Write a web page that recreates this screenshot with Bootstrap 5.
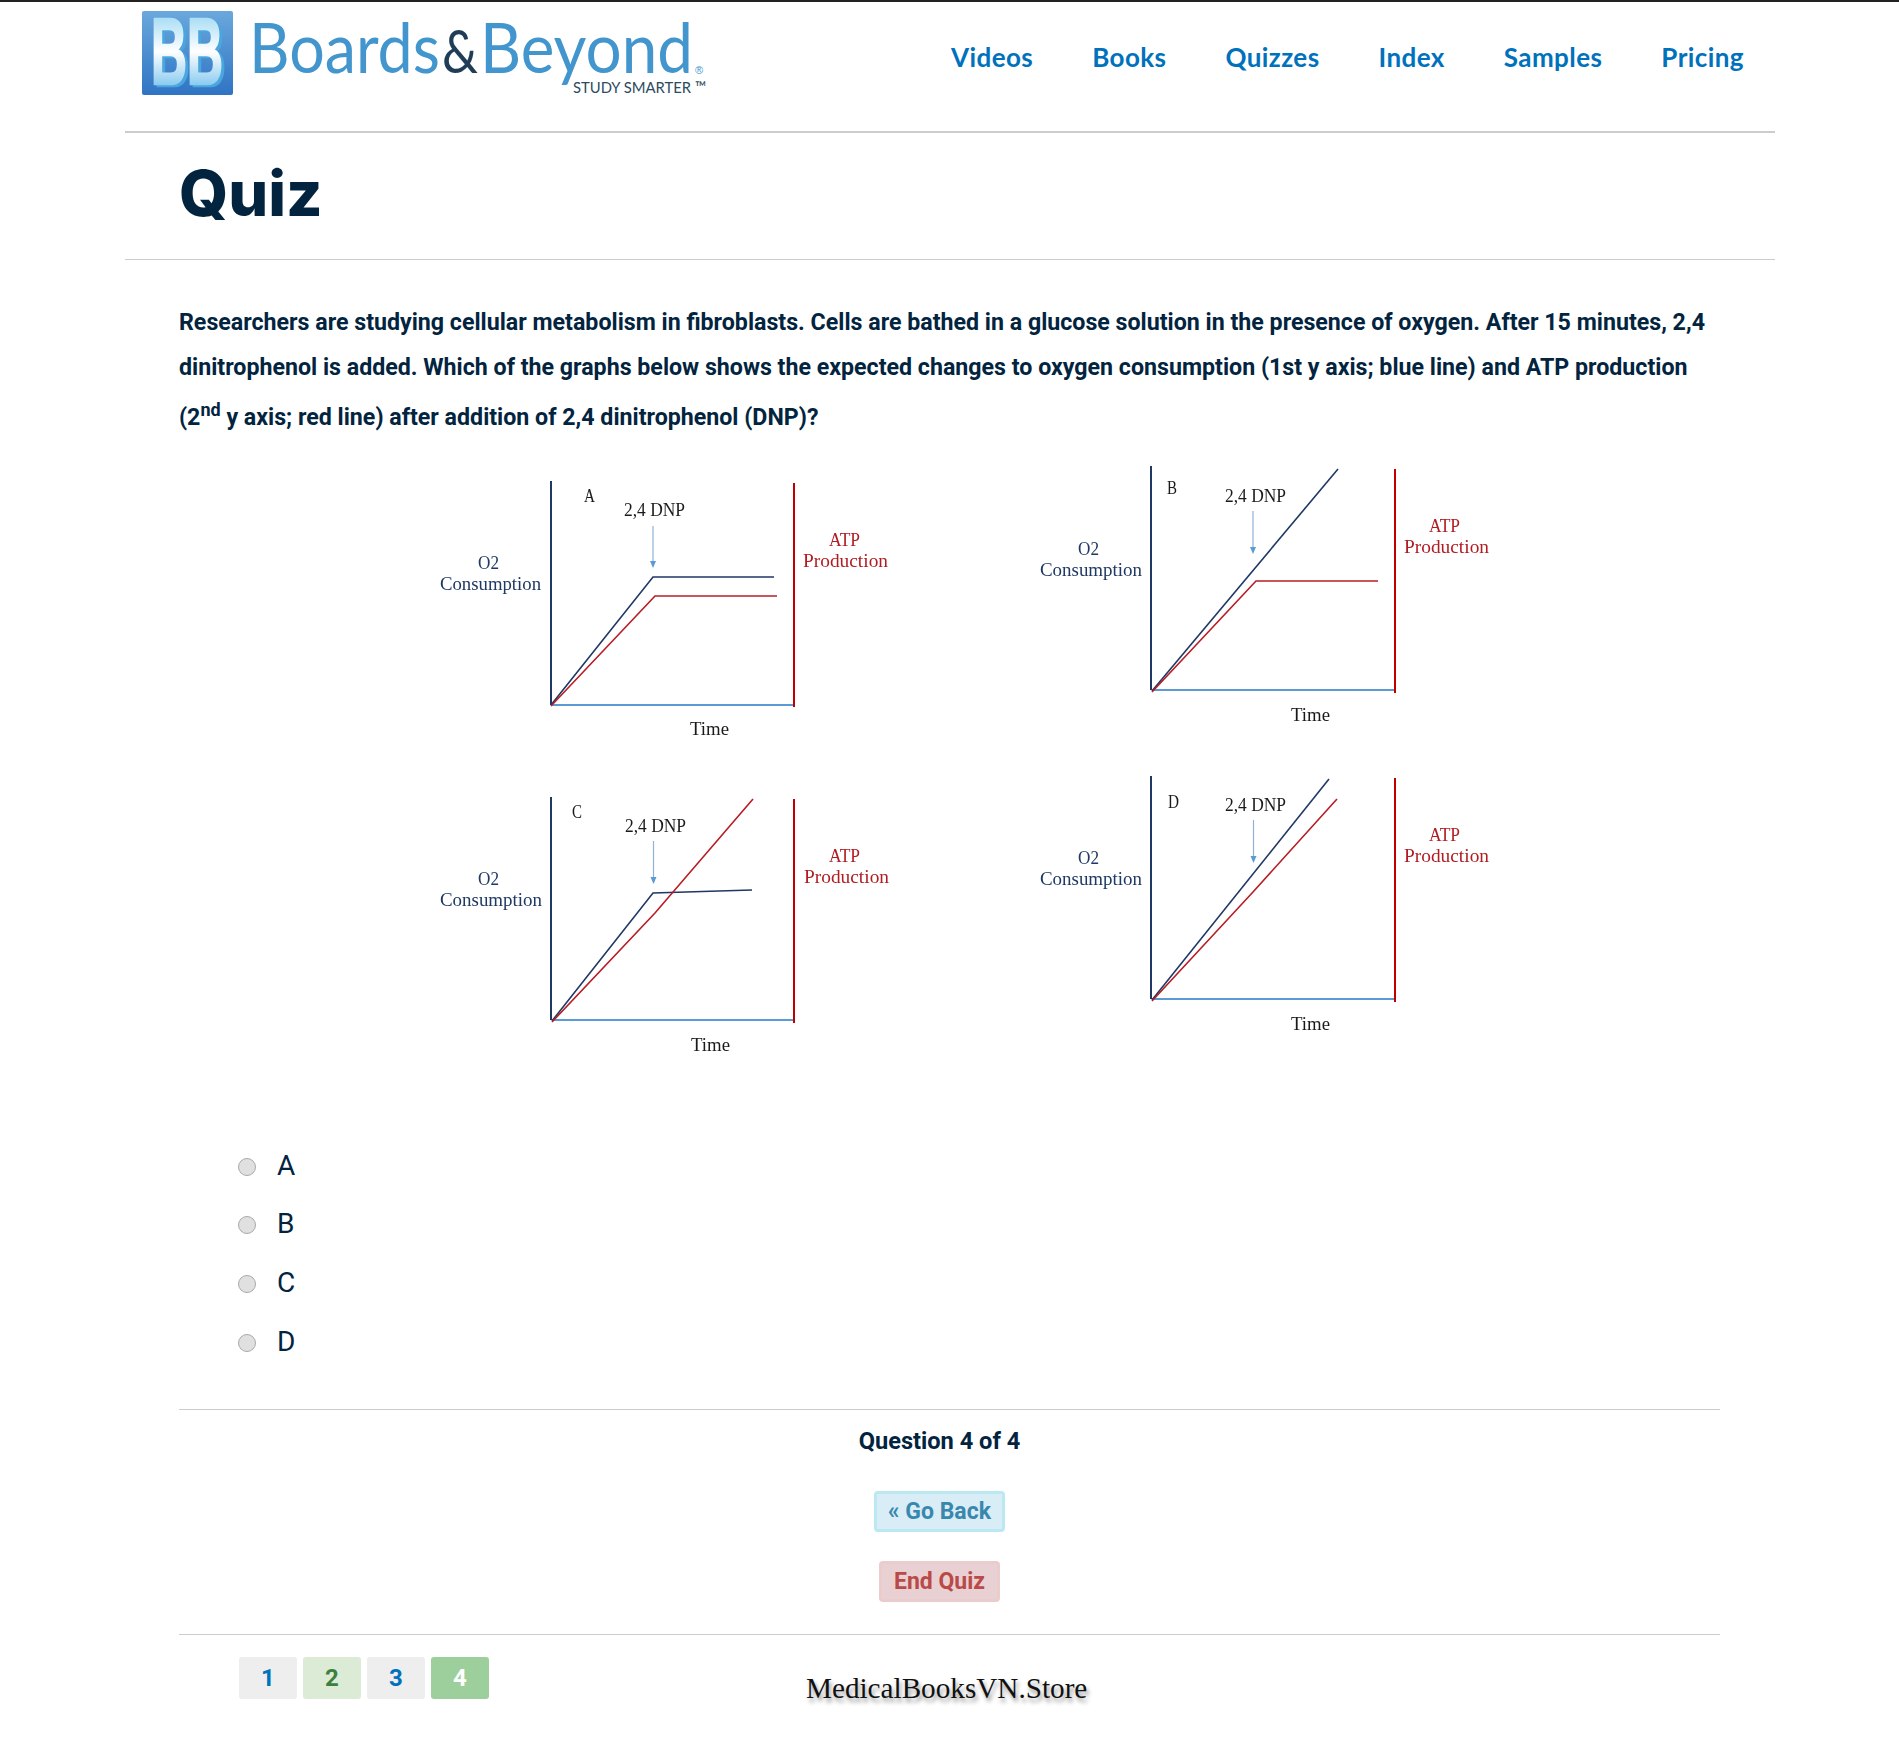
<!DOCTYPE html>
<html lang="en">
<head>
  <meta charset="UTF-8"/>
  <title>Boards &amp; Beyond — Quiz</title>
  <link href="https://cdn.jsdelivr.net/npm/bootstrap@5.3.0/dist/css/bootstrap.min.css" rel="stylesheet"/>
  <style>
    body{background:#fff;color:#02243f;font-family:"Liberation Sans",Arial,sans-serif;border-top:2px solid #222;min-height:1746px;}
    .page-wrap{width:1650px;margin-left:125px;}
    .bb-head{height:131px;border-bottom:2px solid #ccc;}
    .bb-logo{display:block;margin-left:17px;}
    .bb-links{gap:59px;margin-top:36px;margin-right:31px;}
    .bb-links .nav-link{padding:0;font-family:Lato,sans-serif;font-weight:700;font-size:26px;letter-spacing:.42px;line-height:38px;color:#0071bc;}
    .title-row{height:127px;border-bottom:1px solid #ccc;padding-left:54px;}
    .title-row h1{margin:0;font-family:Inter,sans-serif;font-weight:800;font-size:63px;letter-spacing:0;line-height:120px;color:#02243f;}
    .quiz-body{padding:0 55px 0 54px;}
    .q-text{margin:40px 0 0;font-family:Roboto,sans-serif;font-weight:700;font-size:23.2px;line-height:44.6px;}
    .q-text sup{position:static;vertical-align:9px;font-size:18px;line-height:42px;}
    .q-figure{display:block;margin:20.6px auto 0;filter:blur(.35px);}
    .q-figure text{font-family:"Liberation Serif",serif;font-size:18px;}
    .answers{margin:56px 0 0;padding:0 0 0 59px;}
    .answer-row{display:flex;align-items:center;gap:21px;height:58.7px;margin:0;padding:0;}
    .answer-row .form-check-input{float:none;margin:2px 0 0;width:18px;height:18px;background-color:#e0e0e0;border:1px solid #aaa;}
    .answer-row label{font-family:Roboto,sans-serif;font-size:28px;line-height:1;}
    .q-foot{border-top:1px solid #ccc;margin-top:38px;padding:0 20px 0 0;text-align:center;}
    .q-count{font-family:Roboto,sans-serif;font-weight:700;font-size:23.6px;line-height:30px;margin:16px 0 35px;}
    .q-btn{display:block;width:max-content;margin:0 auto;font-family:Roboto,sans-serif;font-weight:700;font-size:23px;line-height:29px;padding:3px 11px;border-width:3px;border-radius:4px;}
    .btn-back,.btn-back:hover{background:#d9edf7;border-color:#bce8f1;color:#3a87ad;margin-bottom:29px;}
    .btn-end,.btn-end:hover{background:#e9d0d3;border-color:#ebcccc;color:#b94a48;padding:3px 12px;}
    .pager-rule{border-top:1px solid #ccc;margin-top:32px;}
    .pager-row{padding:22px 0 0 60px;}
    .pager-list{gap:6px;}
    .pager-box{display:block;width:58px;height:42px;border-radius:3px;text-align:center;text-decoration:none;font-family:Roboto,sans-serif;font-weight:700;font-size:24px;line-height:42px;background:#eee;color:#0071bc;}
    .pager-box.is-right{background:#dcebd5;color:#3c8040;}
    .pager-box.is-on{background:#9ccf9b;color:#fff;}
    .store-mark{margin:11px 0 0 317px;font-family:"Liberation Serif",serif;font-size:29.2px;color:#111;text-shadow:2px 4px 4px #999;line-height:40px;}
    .logo-bb{filter:drop-shadow(3px 2px 0 #4aa6de);}
  </style>
</head>
<body>
<div class="page-wrap">
  <nav class="bb-head d-flex justify-content-between align-items-start">
    <a href="#" class="bb-logo">
      <svg width="575" height="100" viewBox="142 2 575 100" role="img" aria-label="Boards and Beyond">
        <defs>
          <linearGradient id="logoBg" x1="0" y1="0" x2="0" y2="1"><stop offset="0" stop-color="#6aa8dc"/><stop offset="1" stop-color="#2f74c4"/></linearGradient>
          <linearGradient id="logoB" x1="0" y1="0" x2="0" y2="1"><stop offset="0" stop-color="#7ccbf0"/><stop offset=".5" stop-color="#ffffff"/><stop offset="1" stop-color="#49aee8"/></linearGradient>
        </defs>
        <rect x="142" y="11" width="91" height="84" rx="2" fill="url(#logoBg)"/>
        <text class="logo-bb" x="151" y="84" textLength="72" lengthAdjust="spacingAndGlyphs" font-family="Liberation Sans" font-weight="700" font-size="94" fill="url(#logoB)" stroke="url(#logoB)" stroke-width="2.500">BB</text>
        <text x="249" y="73" textLength="191" lengthAdjust="spacingAndGlyphs" font-family="Lato" font-size="70" fill="#4396cd">Boards</text>
        <text x="442" y="73" textLength="36" lengthAdjust="spacingAndGlyphs" font-family="Lato" font-size="60" fill="#1f3d57">&amp;</text>
        <text x="480" y="73" textLength="213" lengthAdjust="spacingAndGlyphs" font-family="Lato" font-size="70" fill="#4396cd">Beyond</text>
        <text x="695" y="74" font-family="Liberation Sans" font-size="11" fill="#4396cd">®</text>
        <text x="573" y="93" textLength="133" lengthAdjust="spacingAndGlyphs" font-family="Lato" font-size="16" fill="#2c4a60">STUDY SMARTER ™</text>
      </svg>
    </a>
    <ul class="navbar-nav flex-row bb-links">
      <li class="nav-item"><a class="nav-link" href="#">Videos</a></li>
      <li class="nav-item"><a class="nav-link" href="#">Books</a></li>
      <li class="nav-item"><a class="nav-link" href="#">Quizzes</a></li>
      <li class="nav-item"><a class="nav-link" href="#">Index</a></li>
      <li class="nav-item"><a class="nav-link" href="#">Samples</a></li>
      <li class="nav-item"><a class="nav-link" href="#">Pricing</a></li>
    </ul>
  </nav>
  <div class="title-row"><h1>Quiz</h1></div>
  <div class="quiz-body">
    <p class="q-text">Researchers are studying cellular metabolism in fibroblasts. Cells are bathed in a glucose solution in the presence of oxygen. After 15 minutes, 2,4 dinitrophenol is added. Which of the graphs below shows the expected changes to oxygen consumption (1st y axis; blue line) and ATP production (2<sup>nd</sup> y axis; red line) after addition of 2,4 dinitrophenol (DNP)?</p>

    <svg class="q-figure" width="1122" height="620" viewBox="389 460 1122 620" role="img" aria-label="Four graphs A to D">
      <g fill="none" stroke-width="1.6">
        <!-- A -->
        <path d="M551 705H794" stroke="#5b9bd5" stroke-width="2"/>
        <path d="M551 481V705" stroke="#1f3864" stroke-width="2"/>
        <path d="M794 483V707" stroke="#c00000" stroke-width="2"/>
        <path d="M551 705L653 577H774" stroke="#1f3864"/>
        <path d="M551 706L655 596H777" stroke="#b81c24"/>
        <path d="M653 526V562" stroke="#8fb2d6" stroke-width="1.2"/>
        <!-- B -->
        <path d="M1152 690H1395" stroke="#5b9bd5" stroke-width="2"/>
        <path d="M1151 466V690" stroke="#1f3864" stroke-width="2"/>
        <path d="M1395 469V693" stroke="#c00000" stroke-width="2"/>
        <path d="M1152 691L1338 469" stroke="#1f3864"/>
        <path d="M1152 692L1256 581H1378" stroke="#b81c24"/>
        <path d="M1253 511V548" stroke="#8fb2d6" stroke-width="1.2"/>
        <!-- C -->
        <path d="M552 1020H794" stroke="#5b9bd5" stroke-width="2"/>
        <path d="M551 797V1020" stroke="#1f3864" stroke-width="2"/>
        <path d="M794 799V1023" stroke="#c00000" stroke-width="2"/>
        <path d="M552 1021L653 893L752 890" stroke="#1f3864"/>
        <path d="M552 1022L655 913L753 799" stroke="#b81c24"/>
        <path d="M653.500 841V878" stroke="#8fb2d6" stroke-width="1.2"/>
        <!-- D -->
        <path d="M1152 999H1395" stroke="#5b9bd5" stroke-width="2"/>
        <path d="M1151 776V999" stroke="#1f3864" stroke-width="2"/>
        <path d="M1395 778V1002" stroke="#c00000" stroke-width="2"/>
        <path d="M1152 1000L1329 779" stroke="#1f3864"/>
        <path d="M1152 1001L1253 892L1337 799" stroke="#b81c24"/>
        <path d="M1253.500 820V857" stroke="#8fb2d6" stroke-width="1.2"/>
      </g>
      <g fill="#5b9bd5">
        <path d="M650 561h6l-3 7z"/>
        <path d="M1250 547h6l-3 7z"/>
        <path d="M650.500 877h6l-3 7z"/>
        <path d="M1250.500 856h6l-3 7z"/>
      </g>
      <g fill="#1a1a1a">
        <text x="584" y="502" textLength="11" lengthAdjust="spacingAndGlyphs">A</text>
        <text x="624" y="516" textLength="61" lengthAdjust="spacingAndGlyphs">2,4 DNP</text>
        <text x="690" y="735" textLength="39" lengthAdjust="spacingAndGlyphs">Time</text>
        <text x="1167" y="494" textLength="10" lengthAdjust="spacingAndGlyphs">B</text>
        <text x="1225" y="502" textLength="61" lengthAdjust="spacingAndGlyphs">2,4 DNP</text>
        <text x="1291" y="721" textLength="39" lengthAdjust="spacingAndGlyphs">Time</text>
        <text x="572" y="818" textLength="10" lengthAdjust="spacingAndGlyphs">C</text>
        <text x="625" y="832" textLength="61" lengthAdjust="spacingAndGlyphs">2,4 DNP</text>
        <text x="691" y="1051" textLength="39" lengthAdjust="spacingAndGlyphs">Time</text>
        <text x="1168" y="808" textLength="11" lengthAdjust="spacingAndGlyphs">D</text>
        <text x="1225" y="811" textLength="61" lengthAdjust="spacingAndGlyphs">2,4 DNP</text>
        <text x="1291" y="1030" textLength="39" lengthAdjust="spacingAndGlyphs">Time</text>
      </g>
      <g fill="#1f3864">
        <text x="478" y="569" textLength="21" lengthAdjust="spacingAndGlyphs">O2</text>
        <text x="440" y="590" textLength="101" lengthAdjust="spacingAndGlyphs">Consumption</text>
        <text x="1078" y="555" textLength="21" lengthAdjust="spacingAndGlyphs">O2</text>
        <text x="1040" y="576" textLength="102" lengthAdjust="spacingAndGlyphs">Consumption</text>
        <text x="478" y="885" textLength="21" lengthAdjust="spacingAndGlyphs">O2</text>
        <text x="440" y="906" textLength="102" lengthAdjust="spacingAndGlyphs">Consumption</text>
        <text x="1078" y="864" textLength="21" lengthAdjust="spacingAndGlyphs">O2</text>
        <text x="1040" y="885" textLength="102" lengthAdjust="spacingAndGlyphs">Consumption</text>
      </g>
      <g fill="#b01c22">
        <text x="829" y="546" textLength="31" lengthAdjust="spacingAndGlyphs">ATP</text>
        <text x="803" y="567" textLength="85" lengthAdjust="spacingAndGlyphs">Production</text>
        <text x="1429" y="532" textLength="31" lengthAdjust="spacingAndGlyphs">ATP</text>
        <text x="1404" y="553" textLength="85" lengthAdjust="spacingAndGlyphs">Production</text>
        <text x="829" y="862" textLength="31" lengthAdjust="spacingAndGlyphs">ATP</text>
        <text x="804" y="883" textLength="85" lengthAdjust="spacingAndGlyphs">Production</text>
        <text x="1429" y="841" textLength="31" lengthAdjust="spacingAndGlyphs">ATP</text>
        <text x="1404" y="862" textLength="85" lengthAdjust="spacingAndGlyphs">Production</text>
      </g>
    </svg>

    <form class="answers">
      <div class="form-check answer-row"><input class="form-check-input" type="radio" name="ans" id="ansA"><label for="ansA">A</label></div>
      <div class="form-check answer-row"><input class="form-check-input" type="radio" name="ans" id="ansB"><label for="ansB">B</label></div>
      <div class="form-check answer-row"><input class="form-check-input" type="radio" name="ans" id="ansC"><label for="ansC">C</label></div>
      <div class="form-check answer-row"><input class="form-check-input" type="radio" name="ans" id="ansD"><label for="ansD">D</label></div>
    </form>

    <div class="q-foot">
      <p class="q-count">Question 4 of 4</p>
      <a href="#" class="btn q-btn btn-back">« Go Back</a>
      <a href="#" class="btn q-btn btn-end">End Quiz</a>
    </div>
    <div class="pager-rule"></div>
    <div class="pager-row d-flex align-items-start">
      <div class="d-flex pager-list">
        <a href="#" class="pager-box">1</a>
        <a href="#" class="pager-box is-right">2</a>
        <a href="#" class="pager-box">3</a>
        <a href="#" class="pager-box is-on">4</a>
      </div>
      <div class="store-mark">MedicalBooksVN.Store</div>
    </div>
  </div>
</div>
<script src="https://cdn.jsdelivr.net/npm/bootstrap@5.3.0/dist/js/bootstrap.bundle.min.js"></script>
</body>
</html>
